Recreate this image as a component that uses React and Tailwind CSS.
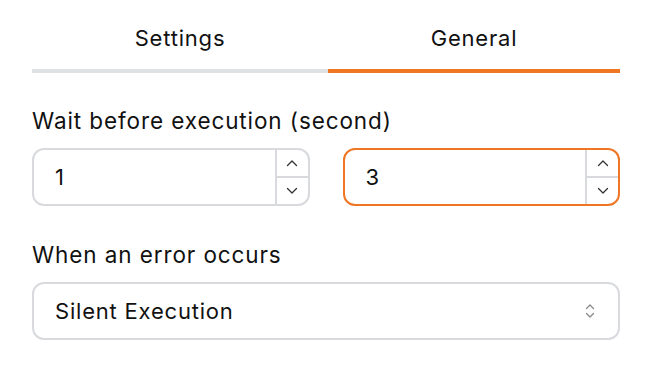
import React from "react";

function Up() {
  return (
    <svg width="12" height="8" viewBox="0 0 12 8" fill="none">
      <path d="M1.5 6.5 L6 2 L10.5 6.5" stroke="#333" strokeWidth="1.3" strokeLinecap="round" strokeLinejoin="round" />
    </svg>
  );
}
function Down() {
  return (
    <svg width="12" height="8" viewBox="0 0 12 8" fill="none">
      <path d="M1.5 1.5 L6 6 L10.5 1.5" stroke="#333" strokeWidth="1.3" strokeLinecap="round" strokeLinejoin="round" />
    </svg>
  );
}

function NumberBox({ value, active }) {
  return (
    <div
      className={
        "flex h-[58px] rounded-[12px] bg-white " +
        (active ? "border-2 border-[#ee7624]" : "border-2 border-[#d8dadd]")
      }
    >
      <div className="flex flex-1 items-center pl-[21px] text-[22px] text-[#111]">{value}</div>
      <div className="flex w-[33px] flex-col border-l-2 border-[#d8dadd]">
        <div className="flex flex-1 items-center justify-center border-b-2 border-[#d8dadd]">
          <Up />
        </div>
        <div className="flex flex-1 items-center justify-center">
          <Down />
        </div>
      </div>
    </div>
  );
}

export default function App() {
  return (
    <div className="h-[368px] w-[652px] bg-white px-8 font-['Inter',sans-serif] tracking-[0.05em] text-[#111]">
      <div className="flex">
        <div className="flex-auto border-b-4 border-[#e0e1e3] pt-[24px] pb-[17px] text-center text-[22px] leading-[28px]">
          Settings
        </div>
        <div className="flex-auto border-b-4 border-[#ef7622] pt-[24px] pb-[17px] text-center text-[22px] leading-[28px]">
          General
        </div>
      </div>
      <div className="mt-[35px] text-[22.5px] leading-[26px] tracking-[0.04em]">Wait before execution (second)</div>
      <div className="mt-[14px] grid grid-cols-2 gap-[33px]">
        <NumberBox value="1" />
        <NumberBox value="3" active />
      </div>
      <div className="mt-[36px] text-[22.5px] leading-[26px] tracking-[0.04em]">When an error occurs</div>
      <div className="mt-[14px] flex h-[58px] items-center rounded-[12px] border-2 border-[#d8dadd] pl-[21px] pr-[22px]">
        <span className="flex-1 text-[22px]">Silent Execution</span>
        <svg width="12" height="18" viewBox="0 0 12 18" fill="none">
          <path d="M2.5 6.5 L6 3 L9.5 6.5" stroke="#888" strokeWidth="1.3" strokeLinecap="round" strokeLinejoin="round" />
          <path d="M2.5 11.5 L6 15 L9.5 11.5" stroke="#888" strokeWidth="1.3" strokeLinecap="round" strokeLinejoin="round" />
        </svg>
      </div>
    </div>
  );
}
